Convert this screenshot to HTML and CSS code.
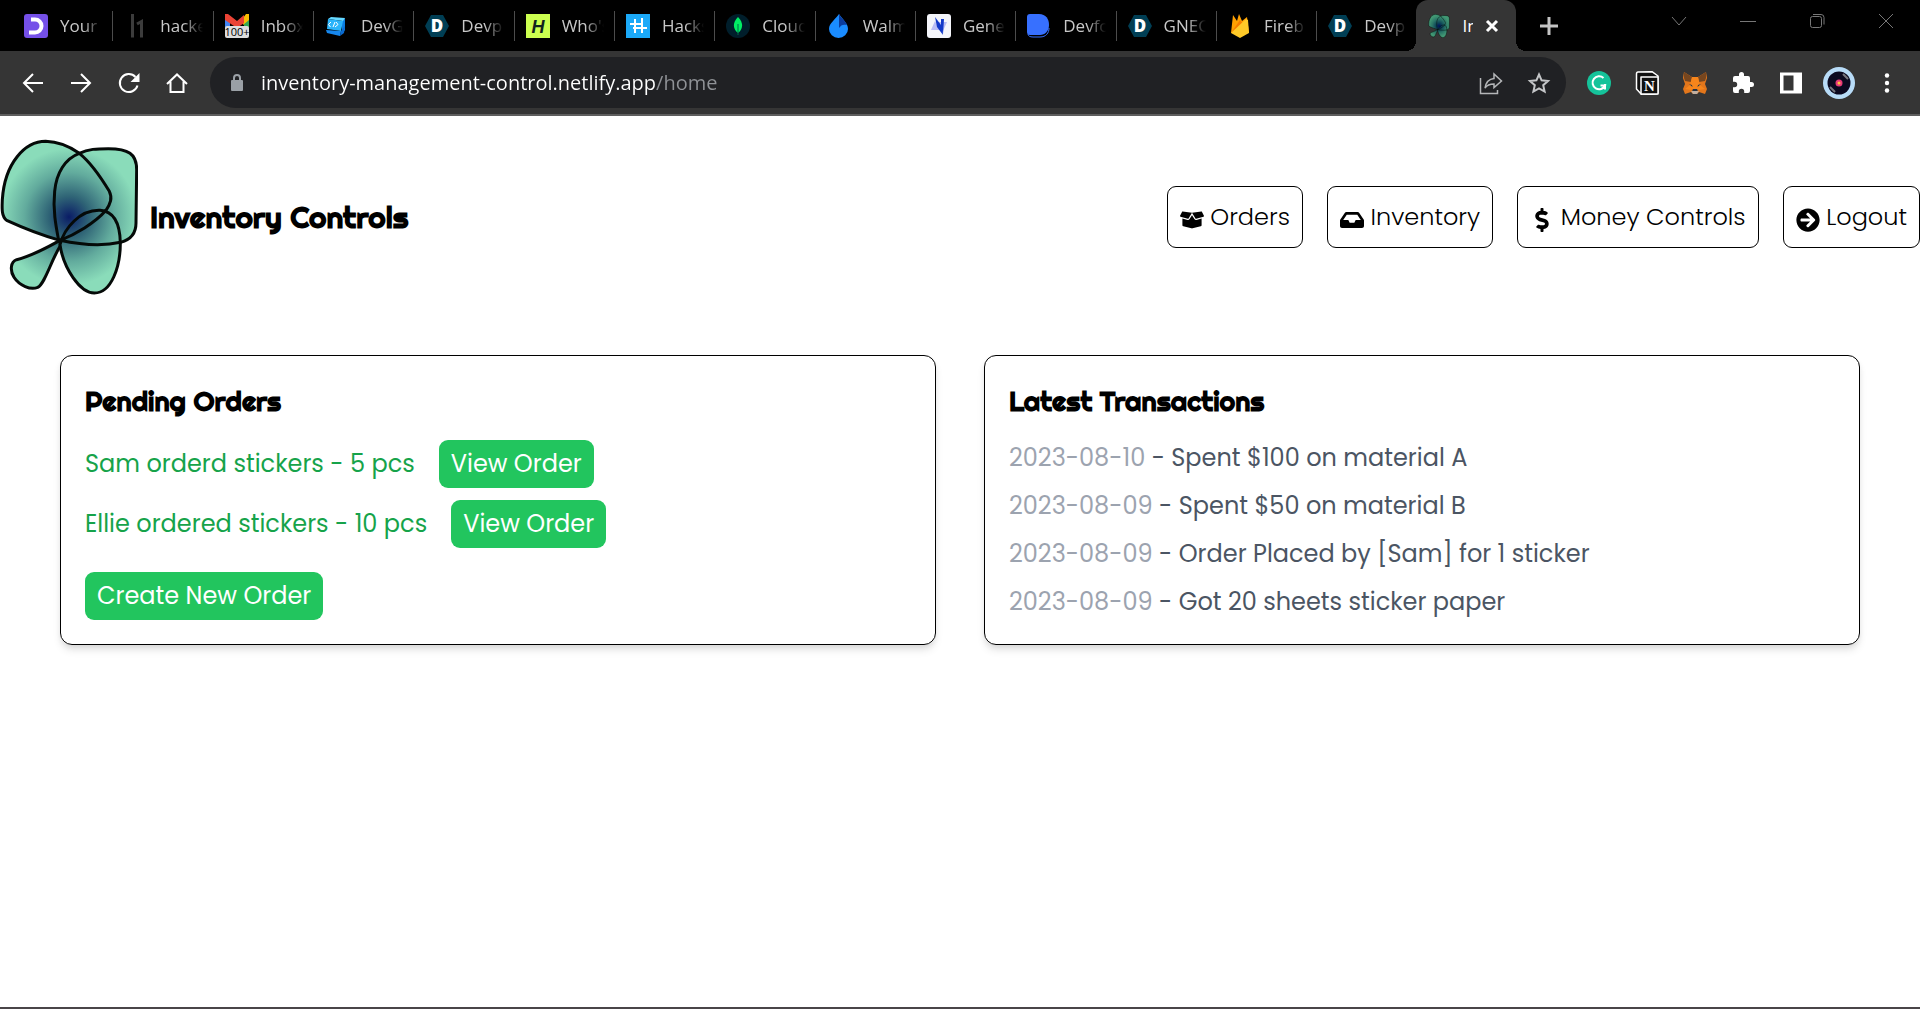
FILE: index.html
```
<!DOCTYPE html>
<html lang="en">
<head>
    <meta charset="UTF-8">
    <meta name="viewport" content="width=device-width, initial-scale=1.0">
    <title>Inventory Controls</title>
    <link rel="stylesheet" href="styles.css">
</head>
<body>
    <svg class="defs" aria-hidden="true">
        <defs>
            <radialGradient id="petal" gradientUnits="userSpaceOnUse" cx="207" cy="292" r="205">
                <stop offset="0" stop-color="#0a1c66"/>
                <stop offset="0.3" stop-color="#2f6476"/>
                <stop offset="0.65" stop-color="#62ab9d"/>
                <stop offset="1" stop-color="#8adcba"/>
            </radialGradient>
            <symbol id="flower" viewBox="0 58 414 468">
                <g fill="url(#petal)" stroke="#050a08" stroke-width="9" stroke-linejoin="round">
                    <path d="M180 362C130 390 85 412 50 420C32 426 29 452 42 473C58 498 92 512 113 503C135 492 152 425 181 378Z"/>
                    <path d="M176 362C168 320 158 270 164 215C169 160 195 117 238 101C265 88 290 87 325 87C385 87 410 102 410 150L408 310C408 340 392 360 362 368C310 380 240 375 180 362Z"/>
                    <path d="M180 362C120 345 70 325 20 302C4 290 6 265 7 240C14 130 75 65 137 65C178 66 208 80 238 101C280 135 310 185 328 215C338 235 331 252 318 272C285 310 225 345 180 362Z"/>
                    <path d="M180 375C193 325 240 270 300 272C345 275 360 320 361 370C361 440 335 520 283 520C240 520 190 445 180 375Z"/>
                    <path fill="none" d="M176 362C168 320 158 270 164 215C169 160 195 117 238 101M318 272C285 310 225 345 180 362C240 375 310 380 362 368"/>
                </g>
            </symbol>
            <symbol id="devpost" viewBox="0 0 24 24">
                <path fill="#003e54" d="M6 1h12l6 11-6 11H6L0 12z"/>
                <text x="12" y="18" text-anchor="middle" font-family="Open Sans, sans-serif" font-size="17" font-weight="800" fill="#fff">D</text>
            </symbol>
        </defs>
    </svg>

    <!-- browser -->
    <div class="tabstrip">
        <div class="tabs" role="tablist">
            <button class="tab" role="tab">
                <svg viewBox="0 0 24 24"><rect width="24" height="24" rx="3" fill="#7550e8"/><path d="M7 5.500h4a6.500 6.500 0 0 1 0 13H5" fill="none" stroke="#fff" stroke-width="4"/></svg>
                <span>Your</span>
            </button>
            <button class="tab" role="tab">
                <svg viewBox="0 0 24 24"><g fill="none" stroke="#3c3c3c" stroke-width="3"><path d="M8.500 0v23.500M13 10l4.500-2.500v16"/></g></svg>
                <span>hacke</span>
            </button>
            <button class="tab" role="tab">
                <svg viewBox="0 0 24 24"><path fill="#4285f4" d="M0 4h5v16H0z"/><path fill="#34a853" d="M19 4h5v16h-5z"/><path fill="#fbbc04" d="M18 4l3-4h3v6l-6 5z"/><path fill="#ea4335" d="M0 0h3l9 7 7-6v8l-7 5L0 6z"/><rect y="12" width="24" height="12" rx="2" fill="#ddd"/><text x="12" y="22" text-anchor="middle" font-family="Open Sans, sans-serif" font-size="11" fill="#000">100+</text></svg>
                <span>Inbox</span>
            </button>
            <button class="tab" role="tab">
                <svg viewBox="0 0 24 24"><path fill="#0b7de0" d="M17 6l3-2v12l-3 4z"/><path fill="#66d9ff" d="M3 5l3-2 14 1-2 3z"/><path fill="#2bb4fa" d="M3 5l15 2-2 10-14-2z"/><path fill="#1687ee" d="M1 16l15 1-1 5-13-3z"/><path fill="#0a6ad0" d="M16 17l4-5-1 7-4 3z"/><path d="M6 8l-2.500 2.500L5.500 13M10 8l-2 5M11 8l2 2.500-3 2.500" fill="none" stroke="#fff"/></svg>
                <span>DevG</span>
            </button>
            <button class="tab" role="tab"><svg><use href="#devpost"/></svg><span>Devp</span></button>
            <button class="tab" role="tab">
                <svg viewBox="0 0 24 24"><rect width="24" height="24" fill="#ccff4f"/><text x="12" y="19" text-anchor="middle" font-family="Liberation Sans Narrow, Liberation Sans, sans-serif" font-size="18" font-style="italic" font-weight="700" fill="#10231d">H</text></svg>
                <span>Who's</span>
            </button>
            <button class="tab" role="tab">
                <svg viewBox="0 0 24 24"><rect width="24" height="24" fill="#1ba9f8"/><path d="M9 5v4M9 11v8M16 4v9M16 15v4M4 10h13M7 14h14" fill="none" stroke="#fff" stroke-width="2"/></svg>
                <span>Hacks</span>
            </button>
            <button class="tab" role="tab">
                <svg viewBox="0 0 24 24"><circle cx="12" cy="12" r="12" fill="#001e2b"/><path fill="#00ed64" d="M12 3c6 6 5 12 0 16-5-4-6-10 0-16z"/><path fill="#00684a" d="M11.500 10h1v11h-1z"/></svg>
                <span>Cloud</span>
            </button>
            <button class="tab" role="tab">
                <svg viewBox="0 0 24 24"><path fill="#1a8cff" d="M12 0c3 5 9 9 9 15a9.500 9 0 0 1-19 0C2 9 9 5 12 0z"/><path fill="#0b3b9c" d="M12 0c2 4 6 6 8 11-4-1-6 0-8 3z"/></svg>
                <span>Walm</span>
            </button>
            <button class="tab" role="tab">
                <svg viewBox="0 0 24 24"><rect width="24" height="24" rx="3" fill="#f4f5fa"/><path fill="#b9bdf5" d="M4 16l4-9 5 9zM11 8h9l-4 9z"/><path fill="#1238c8" d="M8 3l6 8 2 10-6-8zM14 5h3l-1 15-2-8z"/></svg>
                <span>Gene</span>
            </button>
            <button class="tab" role="tab">
                <svg viewBox="0 0 24 24"><path d="M1 20c0 2 2 3 5 3h7c6 0 9-4 9-9" fill="none" stroke="#3770ff" stroke-width="1"/><path fill="#3770ff" d="M3 0h9c7 0 10 5 10 11s-4 10-9 10H3c-2 0-3-1-3-3V3c0-2 1-3 3-3z"/></svg>
                <span>Devfo</span>
            </button>
            <button class="tab" role="tab"><svg><use href="#devpost"/></svg><span>GNEC</span></button>
            <button class="tab" role="tab">
                <svg viewBox="0 0 24 24"><path fill="#ffa000" d="M3 19L5 1l4 6 2-7 3 7 5-4 2 16z"/><path fill="#f57c00" d="M3 19L12 6l3 4z"/><path fill="#ffca28" d="M3 19L18 5l2 1 1 13-9 5z"/></svg>
                <span>Fireb</span>
            </button>
            <button class="tab" role="tab"><svg><use href="#devpost"/></svg><span>Devp</span></button>
            <button class="tab active" role="tab" aria-selected="true">
                <svg class="dim"><use href="#flower"/></svg>
                <span>In</span>
                <svg class="close" viewBox="0 0 14 14"><path d="M2 2l10 10M12 2L2 12" stroke="#fff" stroke-width="3"/></svg>
            </button>
        </div>
        <button class="new-tab" aria-label="New tab"><svg viewBox="0 0 18 18"><path d="M9 0v18M0 9h18" stroke="#c4c4c4" stroke-width="3"/></svg></button>
        <div class="window-btns">
            <button aria-label="Search tabs"><svg viewBox="0 0 16 16"><path d="M1 4l7 8 7-8"/></svg></button>
            <button aria-label="Minimize"><svg viewBox="0 0 16 16"><path d="M0 8.500h16"/></svg></button>
            <button aria-label="Restore"><svg viewBox="0 0 16 16"><rect x="1.500" y="3.500" width="11" height="11" rx="2"/><path d="M4 1.500h8a3 3 0 0 1 3 3v7"/></svg></button>
            <button aria-label="Close"><svg viewBox="0 0 16 16"><path d="M1 1l14 14M15 1L1 15"/></svg></button>
        </div>
    </div>

    <div class="toolbar">
        <button class="tool" aria-label="Back"><svg viewBox="0 0 24 24"><path class="line" d="M22 12H3M12 3l-9 9 9 9"/></svg></button>
        <button class="tool" aria-label="Forward"><svg viewBox="0 0 24 24"><path class="line" d="M2 12h19M12 3l9 9-9 9"/></svg></button>
        <button class="tool" aria-label="Reload"><svg viewBox="0 0 24 24"><path class="line" d="M20.500 14.500A9 9 0 1 1 18.500 6"/><path fill="#fff" d="M22.500 2v9h-9z"/></svg></button>
        <button class="tool" aria-label="Home"><svg viewBox="0 0 24 24"><path class="line" d="M2 13L12 3.500 22 13M5.500 10.500v10.500h13V10.500"/></svg></button>
        <div class="omnibox">
            <svg class="lock" viewBox="0 0 12 18"><rect y="6" width="12" height="11" rx="1" fill="#9aa0a6"/><path d="M3 7V4a3 3 0 0 1 6 0v3" fill="none" stroke="#9aa0a6" stroke-width="2"/></svg>
            <input class="url" type="text" aria-label="Address" value="inventory-management-control.netlify.app/home">
            <button class="tool" aria-label="Share"><svg viewBox="0 0 24 24"><g fill="none" stroke="#b4b6b8" stroke-width="1.500"><path d="M1.500 7v15.500h17V19"/><path d="M6 17c1-6 4-9 9-9.500V3l7.500 7-7.500 6.500V13c-4 0-7 1-9 4z"/></g></svg></button>
            <button class="tool" aria-label="Bookmark"><svg viewBox="0 0 24 24"><path d="M12 3.500l2.600 5.800 6.400.7-4.800 4.200 1.400 6.300L12 17.300l-5.600 3.200 1.400-6.300L3 10l6.400-.7z" fill="none" stroke="#c4c6c8" stroke-width="2"/></svg></button>
        </div>
        <button class="tool" aria-label="Grammarly"><svg viewBox="0 0 24 24"><circle cx="12" cy="12" r="12" fill="#15c39a"/><path d="M16.500 7A6.500 6.500 0 1 0 18 14.500h-4.500M18 13v5.500" fill="none" stroke="#fff" stroke-width="2"/></svg></button>
        <button class="tool" aria-label="Notion"><svg viewBox="0 0 24 24"><path fill="#111" stroke="#fff" stroke-width="1.500" stroke-linejoin="round" d="M3 1l14-.3L23 5v16c0 1-1 2-2 2L7 24l-5.500-6V3c0-1 .5-2 1.500-2z"/><path d="M6 6h17v17H6z" fill="#111" stroke="#fff" stroke-width="1.500" stroke-linejoin="round"/><text x="14.500" y="20" text-anchor="middle" font-family="Liberation Serif, serif" font-size="15" font-weight="700" fill="#fff">N</text></svg></button>
        <button class="tool" aria-label="MetaMask"><svg viewBox="0 0 24 24"><path fill="#e2761b" d="M1 1l8 5h6l8-5 1 6-2 6 2 5-2 5-6-2-2 2h-4l-2-2-6 2-2-5 2-5-2-6z"/><path fill="#76461f" d="M1 1l8 5-1 5-6-1-1-3zM23 1l-8 5 1 5 6-1 1-3z"/><path fill="#f6851b" d="M9 6h6l2 8 5 4-6 1-2-1h-4l-2 1-6-1 5-4z"/><path fill="#233447" d="M6 13l3 1 .5 2zM18 13l-3 1-.5 2zM10 18h4l1 2.500H9z"/><path fill="#c0ad9e" d="M8 20h8l-2 3h-4z"/></svg></button>
        <button class="tool" aria-label="Extensions"><svg viewBox="0 0 24 24"><path fill="#fff" d="M20.500 11H19V7a2 2 0 0 0-2-2h-4V3.500a2.500 2.500 0 0 0-5 0V5H4a2 2 0 0 0-2 2v3.800h1.500a2.700 2.700 0 0 1 0 5.400H2V20a2 2 0 0 0 2 2h3.800v-1.500a2.700 2.700 0 0 1 5.400 0V22H17a2 2 0 0 0 2-2v-4h1.500a2.500 2.500 0 0 0 0-5z"/></svg></button>
        <button class="tool" aria-label="Side panel"><svg viewBox="0 0 24 24"><path fill="#fff" fill-rule="evenodd" d="M1 1.500h22v21H1zM4.500 4.500v15h10v-15z"/></svg></button>
        <button class="tool" aria-label="Profile"><svg class="avatar" viewBox="0 0 32 32"><circle cx="16" cy="16" r="16" fill="#b8dcf8"/><circle cx="16" cy="16" r="11.500" fill="#0b0920"/><path d="M20 7l5 5M7 20l5 5" stroke="#77777f" stroke-width="2"/><circle cx="16" cy="16" r="3.500" fill="#e8397a"/><circle cx="16" cy="16" r="1.500" fill="#ffc23c"/></svg></button>
        <button class="tool" aria-label="Menu"><svg viewBox="0 0 24 24"><g fill="#fff"><circle cx="12" cy="4.500" r="2.200"/><circle cx="12" cy="12" r="2.200"/><circle cx="12" cy="19.500" r="2.200"/></g></svg></button>
    </div>

    <!-- app -->
    <div class="page">
        <header class="header">
            <div class="brand">
                <svg class="logo"><use href="#flower"/></svg>
                <h1>Inventory Controls</h1>
            </div>
            <nav class="nav">
                <button><svg viewBox="0 0 640 512"><path d="M425.700 256c-16.900 0-32.800-9-41.400-23.400L320 126l-64.200 106.600c-8.700 14.500-24.600 23.500-41.500 23.500-4.500 0-9-.6-13.300-1.900L64 215v178c0 14.700 10 27.500 24.200 31l216.200 54.100c10.200 2.500 20.900 2.500 31 0L551.800 424c14.200-3.600 24.200-16.400 24.200-31V215l-137 39.100c-4.300 1.300-8.800 1.900-13.300 1.900zm212.600-112.200L586.800 41c-3.100-6.200-9.800-9.800-16.700-8.900L320 64l91.700 152.100c3.800 6.300 11.400 9.300 18.500 7.300l197.900-56.500c9.900-2.900 14.700-13.900 10.200-23.100zM53.200 41L1.700 143.800c-4.600 9.200.3 20.200 10.100 23l197.900 56.500c7.100 2 14.700-1 18.500-7.300L320 64 69.800 32.100c-6.900-.8-13.500 2.700-16.600 8.900z"/></svg> Orders</button>
                <button><svg viewBox="0 0 576 512"><path d="M567.900 243.900L462.300 85.400A48 48 0 0 0 422.300 64H153.700a48 48 0 0 0-40 21.400L8 243.900A48 48 0 0 0 0 270.500V400c0 26.500 21.500 48 48 48h480c26.500 0 48-21.500 48-48V270.500a48 48 0 0 0-8-26.600zM162.300 128h251.500l85.300 128H376l-32 64H232l-32-64H76.900l85.400-128z"/></svg> Inventory</button>
                <button><svg viewBox="0 0 288 512"><path d="M209.200 233.400l-108-31.600C88.700 198.200 80 186.500 80 173.500c0-16.300 13.200-29.500 29.500-29.500h66.300c12.200 0 24.200 3.700 34.200 10.500 6.100 4.100 14.300 3.100 19.500-2l34.800-34c7.100-6.900 6.100-18.400-1.800-24.500C238 74.800 207.400 64.100 176 64V16c0-8.800-7.200-16-16-16h-32c-8.800 0-16 7.200-16 16v48h-2.500C45.800 64-5.400 118.700.5 183.600c4.200 46.100 39.400 83.600 83.800 96.600l102.500 30c12.500 3.700 21.200 15.300 21.200 28.300 0 16.300-13.200 29.500-29.500 29.500h-66.300C100 368 88 364.300 78 357.500c-6.100-4.100-14.300-3.100-19.500 2l-34.800 34c-7.100 6.900-6.100 18.400 1.800 24.500 24.500 19.200 55.100 29.900 86.500 30v48c0 8.800 7.200 16 16 16h32c8.800 0 16-7.200 16-16v-48.200c46.600-.9 90.300-28.600 105.700-72.700 21.500-61.600-14.600-124.800-72.500-141.700z"/></svg> Money Controls</button>
                <button><svg viewBox="0 0 512 512"><path d="M256 8c137 0 248 111 248 248S393 504 256 504 8 393 8 256 119 8 256 8zm-28.900 143.600l75.500 72.400H120c-13.300 0-24 10.700-24 24v16c0 13.300 10.700 24 24 24h182.600l-75.500 72.400c-9.700 9.300-9.900 24.800-.4 34.300l11 10.900c9.400 9.400 24.600 9.400 33.900 0L404.300 273c9.400-9.400 9.400-24.600 0-33.900L271.600 106.300c-9.400-9.400-24.600-9.400-33.900 0l-11 10.900c-9.500 9.600-9.300 25.100.4 34.400z"/></svg> Logout</button>
            </nav>
        </header>

        <main class="cards">
            <section class="card">
                <h2>Pending Orders</h2>
                <ul class="orders">
                    <li><span>Sam orderd stickers - 5 pcs</span><button class="btn">View Order</button></li>
                    <li><span>Ellie ordered stickers - 10 pcs</span><button class="btn">View Order</button></li>
                </ul>
                <button class="btn">Create New Order</button>
            </section>
            <section class="card">
                <h2>Latest Transactions</h2>
                <ul class="transactions">
                    <li><time>2023-08-10</time> - Spent $100 on material A</li>
                    <li><time>2023-08-09</time> - Spent $50 on material B</li>
                    <li><time>2023-08-09</time> - Order Placed by [Sam] for 1 sticker</li>
                    <li><time>2023-08-09</time> - Got 20 sheets sticker paper</li>
                </ul>
            </section>
        </main>
    </div>
</body>
</html>
```
FILE: styles.css
```
* {
    box-sizing: border-box;
}

body {
    margin: 0;
    min-height: 100vh;
    display: flex;
    flex-direction: column;
    background: #fff;
    font-family: Poppins, Inter, sans-serif;
    font-size: 24px;
    line-height: 36px;
}

button {
    margin: 0;
    padding: 0;
    border: 0;
    background: none;
    font: inherit;
    color: inherit;
    cursor: pointer;
}

.defs {
    position: absolute;
    width: 0;
    height: 0;
}

/* browser tabs */
.tabstrip {
    display: flex;
    height: 51px;
    padding-left: 13px;
    background: #000;
    font-family: "Segoe UI", "Open Sans", sans-serif;
    font-size: 17px;
    line-height: 24px;
}

.tabs {
    flex: 1;
    display: flex;
    min-width: 0;
}

.tab {
    flex: 1;
    min-width: 0;
    display: flex;
    align-items: center;
    gap: 12px;
    padding: 0 11px;
    color: #c8c8c8;
    background: linear-gradient(#4c4c4c, #4c4c4c) right center / 1px 30px no-repeat;
}

.tab svg {
    flex: none;
    width: 24px;
    height: 24px;
}

.tab span {
    flex: 1;
    min-width: 0;
    overflow: hidden;
    white-space: nowrap;
    text-align: left;
    mask-image: linear-gradient(to right, #000 55%, transparent);
}

.tab:nth-last-child(2) {
    background: none;
}

.tab.active {
    position: relative;
    margin-left: -2px;
    color: #fff;
    background: #353535;
    border-radius: 12px 12px 0 0;
}

/* flared feet of the open tab */
.tab.active::before,
.tab.active::after {
    content: "";
    position: absolute;
    bottom: 0;
    width: 10px;
    height: 10px;
}

.tab.active::before {
    right: 100%;
    background: radial-gradient(circle at 0 0, transparent 10px, #353535 10px);
}

.tab.active::after {
    left: 100%;
    background: radial-gradient(circle at 100% 0, transparent 10px, #353535 10px);
}

.tab.active span {
    mask-image: none;
}

.tab .close {
    width: 14px;
    height: 14px;
    margin-right: 6px;
}

.tab .dim {
    filter: brightness(0.65) saturate(1.6);
}

.new-tab {
    width: 66px;
    display: flex;
    align-items: center;
    justify-content: center;
}

.new-tab svg {
    width: 18px;
    height: 18px;
}

.window-btns {
    display: flex;
    margin-left: 62px;
}

.window-btns button {
    width: 69px;
    height: 42px;
    display: flex;
    align-items: center;
    justify-content: center;
}

.window-btns svg {
    width: 16px;
    height: 16px;
    fill: none;
    stroke: #777;
}

/* address bar */
.toolbar {
    display: flex;
    align-items: center;
    height: 65px;
    padding: 0 9px;
    background: #353535;
    border-bottom: 2px solid #5e5e5e;
}

.tool {
    flex: none;
    width: 48px;
    height: 48px;
    display: flex;
    align-items: center;
    justify-content: center;
}

.tool svg {
    width: 24px;
    height: 24px;
}

.tool .avatar {
    width: 32px;
    height: 32px;
}

.line {
    fill: none;
    stroke: #fff;
    stroke-width: 2;
}

.omnibox {
    flex: 1;
    display: flex;
    align-items: center;
    height: 51px;
    margin: 0 9px;
    padding: 0 3px 0 21px;
    border-radius: 26px;
    background: #202124;
}

.lock {
    width: 12px;
    height: 18px;
    margin-right: 18px;
}

.url {
    flex: 1;
    min-width: 0;
    padding: 0;
    border: 0;
    outline: 0;
    color: #fff;
    /* the path is greyed out after the host */
    background: linear-gradient(to right, #fff 395px, #8f9296 395px);
    background-clip: text;
    -webkit-text-fill-color: transparent;
    font-family: "Segoe UI", "Open Sans", sans-serif;
    font-size: 20px;
    line-height: 30px;
}

/* app */
.page {
    flex: 1;
    border-bottom: 2px solid #4a4548;
}

.header {
    display: flex;
    align-items: center;
    justify-content: space-between;
    padding: 23px 0 24px;
}

.brand {
    display: flex;
    align-items: center;
    gap: 12px;
}

.logo {
    width: 138px;
    height: 156px;
}

h1,
h2 {
    margin: 0;
    font-family: Righteous, Lato, sans-serif;
    font-weight: 900;
}

h1 {
    font-size: 30px;
    line-height: 42px;
}

h2 {
    margin-bottom: 18px;
    font-size: 27px;
    line-height: 42px;
}

.nav {
    display: flex;
    gap: 24px;
}

.nav button {
    padding: 12px;
    border: 1px solid #000;
    border-radius: 9px;
    font-weight: 300;
    color: #000;
}

.nav svg {
    width: 24px;
    height: 24px;
    vertical-align: -7px;
}

.cards {
    display: grid;
    grid-template-columns: 1fr 1fr;
    gap: 48px;
    padding: 36px 60px;
}

.card {
    padding: 24px;
    border: 1px solid #000;
    border-radius: 12px;
    box-shadow: 0 6px 9px -1px rgba(0, 0, 0, 0.1), 0 3px 6px -2px rgba(0, 0, 0, 0.1);
}

.card ul {
    margin: 0;
    padding: 0;
    list-style: none;
}

.orders li {
    display: flex;
    align-items: center;
    gap: 24px;
    margin-bottom: 12px;
    color: #16a34a;
}

.orders + .btn {
    margin-top: 12px;
}

.btn {
    padding: 6px 12px;
    border-radius: 9px;
    background: #22c55e;
    color: #fff;
}

.transactions {
    color: #4b5563;
}

.transactions li + li {
    margin-top: 12px;
}

.transactions time {
    color: #9ca3af;
}
```
